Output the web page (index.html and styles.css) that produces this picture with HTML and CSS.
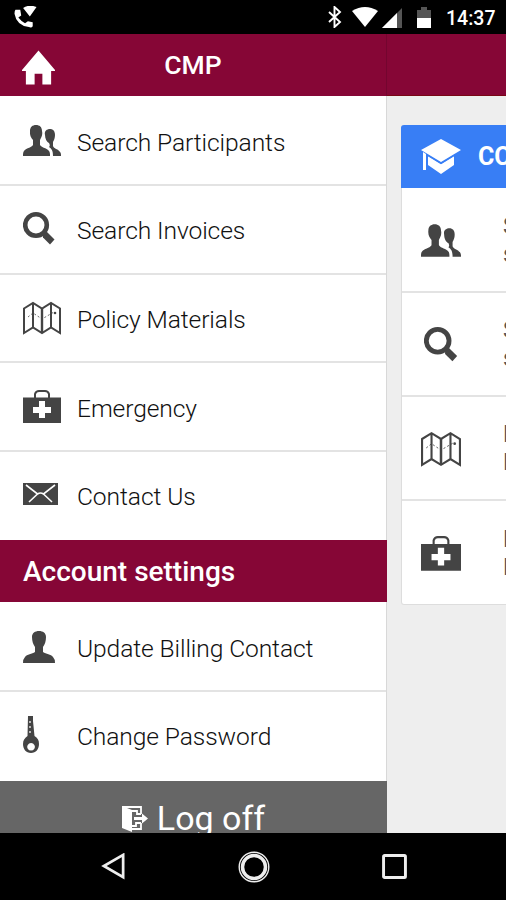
FILE: index.html
```html
<!DOCTYPE html>
<html lang="en">
<head>
<meta charset="utf-8">
<title>CMP</title>
<link rel="stylesheet" href="styles.css">
</head>
<body>
<svg class="sprite" aria-hidden="true">
  <symbol id="person" viewBox="0 0 38 38"><path d="M9 9C9 5 12 3 16 3s7 2 7 6c0 4-1 7-3 10v5c3 2 8 2 10 5q2 2 2 6H0q0-4 2-6c2-3 7-3 10-5v-5C10 16 9 13 9 9z"/></symbol>
  <symbol id="people" viewBox="0 0 38 38"><path d="M7 9C7 5 9.500 3 13 3s6 2 6 6c1 4-1 7-2 9v5c2 3 7 3 9 6 1 1 1 3 1 5H0c0-2 0-4 1-5 2-3 7-3 9-6v-5C8 16 6.500 13 7 9zM22 13c-1-4 2-6 5-6s5 2 5 6c0 3-1 5-2 7v4c1 3 5 3 6 5 2 1 2 3 2 5h-8c0-5-1-7-4-9 1-1 1-2 0-4-2-1-4-4-4-8z"/></symbol>
  <symbol id="search" viewBox="0 0 38 38"><circle cx="13" cy="15" r="10.800" fill="none" stroke="currentColor" stroke-width="4.600"/><path d="m20 25 3.500-3.500 8 8-4.500 5-7-7z"/></symbol>
  <symbol id="map" viewBox="0 0 38 38"><g fill="none" stroke="currentColor" stroke-width="2"><path d="M1 9.500 10 4l9 5.500L28 4l9 5.500V34l-9-5.500-9 5.500-9-5.500L1 34zM10 4v24.500M28 4v24.500"/><path d="M19 9.500V34" stroke-width="2.400"/><path d="m5 18 5-4 9 6 12-7" stroke-width=".8" stroke-dasharray="2 2"/></g><circle cx="32" cy="14" r="1.300"/></symbol>
  <symbol id="aid" viewBox="0 0 38 38"><path d="M12 10V6q1-3 4-3h6q3 0 4 3v4" fill="none" stroke="currentColor" stroke-width="2"/><path fill-rule="evenodd" d="M0 9.500h38V35H0zM16 13v6h-6v6h6v5h6v-5h6v-6h-6v-6z"/></symbol>
  <symbol id="mail" viewBox="0 0 38 38"><path d="M0 7h35v22H0z"/><path d="m3 9 11.500 9q3-2 6 0L32 9M6 26l8.500-8M29 26l-8.500-8" fill="none" stroke="#fff" stroke-width="1.600"/></symbol>
  <symbol id="key" viewBox="0 0 38 38"><path fill-rule="evenodd" d="M5 0h5v5l1.500 15c3 2 4.500 4 4.500 8 0 5-3 9-8 9s-8-4-8-9c0-4 2-6 4.500-8zM8 27a3.800 3.800 0 1 0 .1 0z"/><path d="M7 5v14" stroke="#ddd" stroke-width="1.500" stroke-dasharray="2 3"/></symbol>
</svg>

<header class="status">
  <svg class="call" viewBox="0 0 24 24"><path d="M1 4h5l1 6-3 2q3 4 7 6l3-2 5 1v4q-1 2-4 1Q2 20 0 8q0-3 1-4zM9 2q6-4 14-1l-7 10z"/></svg>
  <div class="status-icons">
    <svg class="bluetooth" viewBox="0 0 14 22"><path d="m1 6 11 10-5.500 5V1L12 6 1 16" fill="none" stroke="#fff" stroke-width="1.900"/></svg>
    <svg class="wifi" viewBox="0 0 26 20"><path d="M0 4q13-8 26 0L13 20z"/></svg>
    <svg class="signal" viewBox="0 0 20 20"><path d="M20 0v20H0z" fill="#555"/><path d="M15 5v15H0z"/></svg>
    <svg class="battery" viewBox="0 0 14 21"><path d="M0 3h4V0h6v3h4v8H0z" fill="#555"/><path d="M0 11h14v10H0z"/></svg>
    <span class="clock">14:37</span>
  </div>
</header>

<div class="screen">
  <nav class="drawer">
    <div class="drawer-head">
      <svg class="home" viewBox="0 0 34 35"><path d="M17 0 34 20v1h-4v14h-9V24h-8v11H4V21H0v-1z"/></svg>
      <h1>CMP</h1>
    </div>
    <ul class="menu">
      <li><svg><use href="#people"/></svg><span>Search Participants</span></li>
      <li><svg><use href="#search"/></svg><span>Search Invoices</span></li>
      <li><svg><use href="#map"/></svg><span>Policy Materials</span></li>
      <li><svg><use href="#aid"/></svg><span>Emergency</span></li>
      <li><svg><use href="#mail"/></svg><span>Contact Us</span></li>
    </ul>
    <h2>Account settings</h2>
    <ul class="menu">
      <li><svg><use href="#person"/></svg><span>Update Billing Contact</span></li>
      <li><svg><use href="#key"/></svg><span>Change Password</span></li>
    </ul>
    <div class="logoff">
      <svg viewBox="0 0 26 27"><path d="m0 1 10 4v22L0 23z"/><path d="M0 2h19v7M19 18v6h-9M19 9h-4V6h-5M19 18h-5v3h-4" fill="none" stroke="#fff" stroke-width="1.800"/><path d="M12 12h8V8.500l6 5-6 5V15h-8z"/></svg>
      <span>Log off</span>
    </div>
  </nav>

  <main class="page">
    <div class="page-head"></div>
    <section class="card">
      <div class="card-head">
        <svg viewBox="0 0 40 35"><path d="m0 11 20-11 20 11-20 12zM2 13l3 2v16H2zM7 17l13 8 13-8v9l-13 9-13-9z"/><path d="m6 16 14 8.500L34 16" fill="none" stroke="#387ef5" stroke-width="1.300"/></svg>
        <span>CC</span>
      </div>
      <div class="card-row"><svg><use href="#people"/></svg><p>S<br>s</p></div>
      <div class="card-row"><svg class="inset"><use href="#search"/></svg><p>S<br>s</p></div>
      <div class="card-row"><svg><use href="#map"/></svg><p>P<br>L</p></div>
      <div class="card-row"><svg><use href="#aid"/></svg><p>E<br>L</p></div>
    </section>
  </main>
</div>

<footer class="navbar">
  <svg viewBox="0 0 24 28"><path d="M22 2v23L2 13.500z"/></svg>
  <svg class="circle" viewBox="0 0 32 32"><circle cx="16" cy="16" r="14.800" stroke-width="1.400"/><circle cx="16" cy="16" r="11.500" stroke-width="3.500"/></svg>
  <svg viewBox="0 0 24 24"><rect x="1.500" y="1.500" width="21" height="21" rx="1"/></svg>
</footer>
</body>
</html>
```

FILE: styles.css
```css
* { box-sizing: border-box; }
body {
  margin: 0;
  width: 506px;
  height: 900px;
  overflow: hidden;
  display: flex;
  flex-direction: column;
  background: #000;
  font-family: Roboto, "Liberation Sans", sans-serif;
}
svg { display: block; flex: none; fill: currentColor; }
.sprite { position: absolute; width: 0; height: 0; }
h1, h2, p, ul { margin: 0; padding: 0; }

.status {
  height: 34px;
  flex: none;
  display: flex;
  justify-content: space-between;
  align-items: flex-start;
  padding: 6px 10px 0 14px;
  color: #fff;
}
.call { width: 24px; height: 23px; }
.status-icons { display: flex; align-items: flex-start; }
.bluetooth { width: 14px; height: 22px; margin-right: 10px; }
.wifi { width: 26px; height: 20px; margin: 1px 4px 0 0; }
.signal { width: 20px; height: 20px; margin: 2px 15px 0 0; }
.battery { width: 14px; height: 21px; margin: 1px 15px 0 0; }
.clock { font-size: 19.5px; font-weight: 500; line-height: 25px; width: 50px; white-space: nowrap; }

.screen { height: 799px; flex: none; display: flex; overflow: hidden; background: #eee; }
.drawer { width: 387px; flex: none; background: #fff; border-right: 1px solid #d8d8d8; }
.drawer-head, .drawer h2, .logoff { margin-right: -1px; }
.drawer-head {
  height: 62px;
  display: grid;
  grid-template-columns: 54px 1fr 54px;
  align-items: center;
  background: #860636;
  color: #fff;
  padding-left: 22px;
  padding-right: 22px;
  border-right: 1px solid #74052f;
}
.home { width: 33px; height: 35px; margin-top: 4px; }
h1 { font-size: 26.5px; line-height: 30px; font-weight: 500; text-align: center; }
.menu { list-style: none; padding-top: 1.5px; }
h2 + .menu { padding-top: 1px; }
.menu li {
  height: 88.6px;
  display: flex;
  align-items: center;
  padding-left: 23px;
  color: #444;
  border-bottom: 2px solid #e3e3e3;
}
.menu li:last-child { border-bottom-color: #fff; }
.menu svg { width: 38px; height: 38px; margin-right: 16px; }
.menu span { color: #111; font-size: 24.6px; font-weight: 300; letter-spacing: -.1px; white-space: nowrap; padding-top: 3px; }
h2 {
  height: 62px;
  padding-left: 23px;
  background: #860636;
  color: #fff;
  font-size: 28px;
  font-weight: 500;
  line-height: 63px;
}
.logoff {
  height: 60px;
  display: flex;
  justify-content: center;
  padding-top: 17px;
  background: #666;
  color: #fff;
  font-size: 34px;
  line-height: 40px;
}
.logoff svg { width: 26px; height: 27px; margin: 7px 9px 0 0; }

.page { flex: 1; min-width: 0; overflow: hidden; }
.page-head { height: 62px; background: #860636; border-bottom: 1px solid #7a0715; }
.card {
  width: 480px;
  margin: 28.5px 0 0 14px;
  border: 1px solid #ddd;
  border-top: 0;
  border-radius: 3px;
  background: #fff;
}
.card-head {
  height: 63px;
  margin-left: -1px;
  display: flex;
  align-items: center;
  padding-left: 20px;
  background: #387ef5;
  border-radius: 3px 0 0;
  color: #fff;
  font-size: 25px;
  font-weight: 700;
}
.card-head svg { width: 40px; height: 35px; margin-right: 17px; }
.card-row {
  height: 104.2px;
  display: flex;
  align-items: center;
  padding: 3px 0 0 19px;
  color: #444;
  border-bottom: 2px solid #e3e3e3;
}
.card-head + .card-row { height: 105.2px; }
.card-row:last-child { height: 103px; border-bottom: 0; }
.card-row svg { width: 40px; height: 40px; margin-right: 42px; }
.card-row .inset { margin-left: 3px; margin-right: 39px; }
.card-row p { font-size: 23px; line-height: 28px; color: #555; }

.navbar {
  flex: 1;
  display: flex;
  align-items: center;
  justify-content: space-between;
  padding: 0 99px 0 101px;
  color: #eee;
}
.navbar svg { width: 25px; height: 27px; fill: none; stroke: currentColor; stroke-width: 2.8; }
.navbar .circle { width: 32px; height: 32px; }
```
